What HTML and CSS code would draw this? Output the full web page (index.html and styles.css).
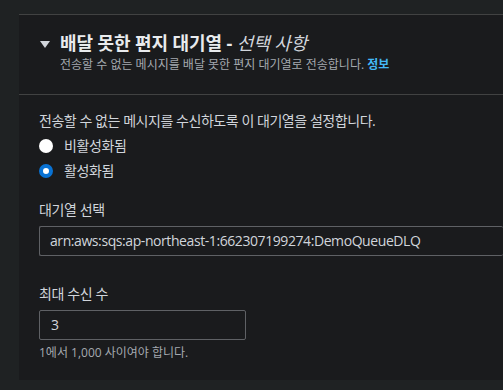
FILE: index.html
```html
<!DOCTYPE html>
<html lang="ko">
<head>
    <meta charset="UTF-8">
    <meta name="viewport" content="width=device-width, initial-scale=1.0">
    <title>배달 못한 편지 대기열</title>
    <link rel="stylesheet" href="styles.css">
</head>
<body>
    <div class="panel">
        <div class="panel-header">
            <h2 class="title">
                <span class="caret"></span>
                <span>배달 못한 편지 대기열 - <i>선택 사항</i></span>
            </h2>
            <p class="desc">전송할 수 없는 메시지를 배달 못한 편지 대기열로 전송합니다. <a href="#">정보</a></p>
        </div>
        <div class="panel-body">
            <p class="lead">전송할 수 없는 메시지를 수신하도록 이 대기열을 설정합니다.</p>
            <label class="radio"><span class="dot"></span>비활성화됨</label>
            <label class="radio"><span class="dot on"></span>활성화됨</label>

            <div class="field">
                <div class="label">대기열 선택</div>
                <div class="input wide">arn:aws:sqs:ap-northeast-1:662307199274:DemoQueueDLQ</div>
            </div>

            <div class="field">
                <div class="label">최대 수신 수</div>
                <div class="input small">3</div>
                <div class="hint">1에서 1,000 사이여야 합니다.</div>
            </div>
        </div>
    </div>
</body>
</html>
```

FILE: styles.css
```css
/* 기본 */
* { margin: 0; padding: 0; box-sizing: border-box; }
body { background: #1f2223; padding: 14px 0 0 19px; font-family: "Open Sans", "Noto Sans CJK KR", sans-serif; color: #d1d5db; overflow: hidden; height: 390px; }

.panel { background: #1a1b1d; border-top: 1px solid #414242; height: 366px; }

/* 헤더 */
.panel-header { padding: 17px 20px 0 21px; height: 80px; border-bottom: 1px solid #414242; }
.title { display: flex; align-items: center; gap: 10px; font-size: 18px; font-weight: 700; line-height: 22px; color: #e9ebed; letter-spacing: -0.1px; }
.title i { font-weight: 400; font-style: italic; color: #d1d5db; }
.caret { width: 0; height: 0; border-left: 5px solid transparent; border-right: 5px solid transparent; border-top: 7px solid #d1d5db; margin-top: 2px; }
.desc { margin: 3px 0 0 20px; font-size: 12px; line-height: 16px; color: #a4a9af; letter-spacing: 0; }
.desc a { color: #44b9f6; font-weight: 700; text-decoration: none; }

/* 본문 */
.panel-body { padding: 16px 20px; }
.lead { font-size: 14px; line-height: 20px; letter-spacing: -0.45px; }
.radio { display: flex; align-items: center; gap: 11px; font-size: 14px; line-height: 20px; margin-top: 5px; letter-spacing: -0.4px; }
.dot { width: 14px; height: 14px; border-radius: 50%; background: #fff; }
.dot.on { background: #fff; border: 4px solid #0972d3; }

.field { margin-top: 19px; }
.field + .field { margin-top: 28px; }
.label { font-size: 14px; line-height: 20px; letter-spacing: -0.4px; }
.input { margin-top: 6px; height: 30px; border: 1px solid #5f6165; border-radius: 2px; padding: 0 10px; font-size: 14px; line-height: 28px; letter-spacing: -0.42px; }
.input.wide { margin-right: -20px; border-right: none; }
.input.small { width: 207px; padding-left: 11px; }
.hint { margin-top: 5px; font-size: 12px; line-height: 16px; color: #a4a9af; letter-spacing: 0; }
```
